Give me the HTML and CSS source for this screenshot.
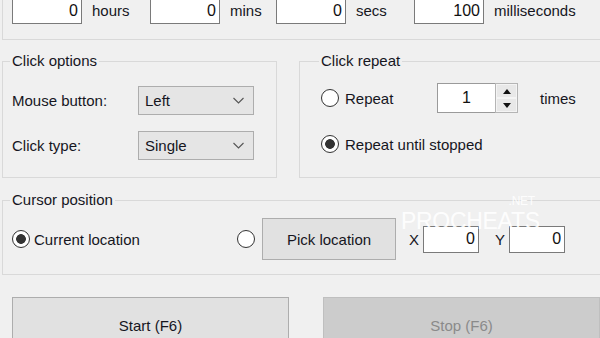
FILE: index.html
```html
<!DOCTYPE html>
<html lang="en">
<head>
    <meta charset="UTF-8">
    <meta name="viewport" content="width=device-width, initial-scale=1.0">
    <title>Auto Clicker</title>
    <link rel="stylesheet" href="styles.css">
</head>
<body>
    <div class="window">
        <fieldset class="group interval">
            <div class="interval-grid">
                <input type="text" class="num" value="0">
                <span class="unit">hours</span>
                <input type="text" class="num" value="0">
                <span class="unit">mins</span>
                <input type="text" class="num" value="0">
                <span class="unit">secs</span>
                <input type="text" class="num" value="100">
                <span class="unit">milliseconds</span>
            </div>
        </fieldset>

        <div class="options-row">
            <fieldset class="group click-options">
                <legend>Click options</legend>
                <div class="field-row">
                    <span class="field-label">Mouse button:</span>
                    <div class="dropdown">
                        <span>Left</span>
                        <svg width="11" height="7" viewBox="0 0 11 7"><polyline points="0.5,1 5.5,6 10.5,1" fill="none" stroke="#555" stroke-width="1.1"/></svg>
                    </div>
                </div>
                <div class="field-row">
                    <span class="field-label">Click type:</span>
                    <div class="dropdown">
                        <span>Single</span>
                        <svg width="11" height="7" viewBox="0 0 11 7"><polyline points="0.5,1 5.5,6 10.5,1" fill="none" stroke="#555" stroke-width="1.1"/></svg>
                    </div>
                </div>
            </fieldset>

            <fieldset class="group click-repeat">
                <legend>Click repeat</legend>
                <div class="repeat-row">
                    <label class="radio-label repeat-times">
                        <input type="radio" name="repeat" class="radio">
                        Repeat
                    </label>
                    <div class="spin">
                        <input type="text" class="spin-input" value="1">
                        <div class="spin-buttons">
                            <span class="spin-btn"><svg width="8" height="5" viewBox="0 0 8 5"><polygon points="0,5 4,0 8,5" fill="#111"/></svg></span>
                            <span class="spin-btn"><svg width="8" height="5" viewBox="0 0 8 5"><polygon points="0,0 8,0 4,5" fill="#111"/></svg></span>
                        </div>
                    </div>
                    <span class="times">times</span>
                </div>
                <div class="repeat-row">
                    <label class="radio-label">
                        <input type="radio" name="repeat" class="radio" checked>
                        Repeat until stopped
                    </label>
                </div>
            </fieldset>
        </div>

        <fieldset class="group cursor">
            <legend>Cursor position</legend>
            <div class="cursor-row">
                <label class="radio-label current">
                    <input type="radio" name="cursor" class="radio" checked>
                    Current location
                </label>
                <input type="radio" name="cursor" class="radio">
                <button class="btn pick">Pick location</button>
                <span class="axis">X</span>
                <input type="text" class="num coord" value="0">
                <span class="axis y">Y</span>
                <input type="text" class="num coord" value="0">
            </div>
        </fieldset>

        <div class="actions">
            <button class="btn big">Start (F6)</button>
            <button class="btn big" disabled>Stop (F6)</button>
        </div>

        <div class="watermark">PROCHEATS<span class="net">.NET</span></div>
    </div>
</body>
</html>
```

FILE: styles.css
```css
body {
    margin: 0;
    background-color: #f0f0f0;
    font-family: "Liberation Sans", Arial, sans-serif;
    font-size: 15px;
    color: #16161e;
    overflow: hidden;
}
.window {
    position: relative;
    width: 600px;
    height: 338px;
    padding-left: 2px;
    box-sizing: border-box;
    overflow: hidden;
}
.group {
    box-sizing: border-box;
    margin: 0;
    min-width: 0;
    border: 1px solid #d9d9d9;
}
.group legend {
    padding: 0 2px;
    margin-left: -2px;
    line-height: 18px;
}

/* interval row */
.interval {
    width: 598px;
    margin-top: -12px;
    padding: 8px 0 15px 9px;
    border-right: none;
}
.interval-grid {
    display: grid;
    grid-template-columns: 70px 68px 70px 56px 70px 68px 70px auto;
    align-items: center;
}
.num {
    box-sizing: border-box;
    width: 100%;
    height: 27px;
    margin: 0;
    padding: 0 3px 0 0;
    border: 1px solid #7a7a7a;
    background-color: white;
    font: inherit;
    font-size: 16px;
    color: #111;
    text-align: right;
}
.unit {
    padding-left: 10px;
}

/* click options / repeat */
.options-row {
    display: flex;
    gap: 22px;
    margin-top: 12px;
}
.click-options {
    flex: 0 0 275px;
    padding: 16px 21px 16px 9px;
}
.field-row {
    display: flex;
    align-items: center;
    height: 29px;
}
.field-row + .field-row {
    margin-top: 16px;
}
.field-label {
    width: 126px;
}
.dropdown {
    box-sizing: border-box;
    width: 116px;
    height: 29px;
    display: flex;
    align-items: center;
    justify-content: space-between;
    padding: 0 9px 0 6px;
    border: 1px solid #adadad;
    background-color: #e5e5e5;
}
.click-repeat {
    flex: 1 1 auto;
    padding: 13px 0 18px 21px;
    border-right: none;
}
.repeat-row {
    display: flex;
    align-items: center;
    height: 30px;
}
.repeat-row + .repeat-row {
    margin-top: 16px;
}
.radio-label {
    display: flex;
    align-items: center;
    gap: 6px;
}
.repeat-times {
    width: 116px;
}
.radio {
    appearance: none;
    box-sizing: border-box;
    width: 18px;
    height: 18px;
    margin: 0;
    border: 1px solid #333;
    border-radius: 50%;
    background-color: white;
}
.radio:checked {
    background: radial-gradient(circle, #333 0 4.5px, white 5.2px);
}
.spin {
    display: flex;
    width: 81px;
    height: 30px;
}
.spin-input {
    box-sizing: border-box;
    width: 58px;
    height: 30px;
    margin: 0;
    border: 1px solid #9a9a9a;
    border-right: none;
    background-color: white;
    font: inherit;
    font-size: 16px;
    color: #111;
    text-align: center;
}
.spin-buttons {
    box-sizing: border-box;
    width: 23px;
    display: flex;
    flex-direction: column;
    border: 1px solid #b5b5b5;
    background-color: #e8e8e8;
}
.spin-btn {
    flex: 1;
    display: flex;
    align-items: center;
    justify-content: center;
    border: 1px solid #f4f4f4;
}
.times {
    margin-left: 22px;
}

/* cursor position */
.cursor {
    width: 598px;
    margin-top: 13px;
    padding: 9px 0 14px 9px;
    border-right: none;
}
.cursor-row {
    display: flex;
    align-items: center;
    height: 42px;
}
.current {
    width: 225px;
    flex-shrink: 0;
    gap: 4px;
}
.btn {
    box-sizing: border-box;
    margin: 0;
    border: 1px solid #adadad;
    background-color: #e1e1e1;
    font: inherit;
    color: #16161e;
}
.pick {
    flex: 0 0 134px;
    height: 42px;
    margin-left: 7px;
}
.axis {
    margin: 0 4px 0 13px;
}
.axis.y {
    margin-left: 16px;
}
.coord {
    flex: 0 0 56px;
}

/* start / stop */
.actions {
    display: flex;
    gap: 34px;
    margin-top: 22px;
    padding-left: 10px;
}
.big {
    flex: 0 0 277px;
    height: 56px;
}
.big:disabled {
    background-color: #cccccc;
    border-color: #bfbfbf;
    color: #8a8a8a;
}

.watermark {
    position: absolute;
    top: 208px;
    left: 401px;
    font-size: 23px;
    color: rgba(255, 255, 255, 0.92);
    letter-spacing: -0.3px;
}
.watermark .net {
    position: absolute;
    top: -14px;
    right: 5px;
    font-size: 12px;
}
```
